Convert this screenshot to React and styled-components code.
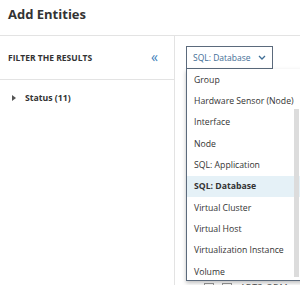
import React from "react";
import styled, { createGlobalStyle } from "styled-components";

const Global = createGlobalStyle`
  body {
    margin: 0;
    font-family: "Open Sans", "Liberation Sans", sans-serif;
    background: #fff;
    overflow: hidden;
  }
`;

const Page = styled.div`
  width: 300px;
  height: 285px;
  overflow: hidden;
  display: flex;
  flex-direction: column;
  color: #333;
`;

const Header = styled.div`
  height: 36px;
  display: flex;
  align-items: center;
  padding: 0 8px;
  border-bottom: 1px solid #e3e3e3;
  box-sizing: border-box;
`;

const Title = styled.h1`
  margin: 0;
  font-size: 13px;
  font-weight: 700;
  color: #333;
  margin-top: -8px;
`;

const Body = styled.div`
  flex: 1;
  display: flex;
`;

const Sidebar = styled.div`
  width: 175px;
  border-right: 1px solid #e3e3e3;
  box-sizing: border-box;
`;

const SideHead = styled.div`
  height: 44px;
  display: flex;
  align-items: center;
  justify-content: space-between;
  padding: 0 16px 0 8px;
  border-bottom: 1px solid #e3e3e3;
  box-sizing: border-box;
`;

const SideTitle = styled.span`
  font-size: 8.5px;
  font-weight: 700;
  color: #333;
`;

const Collapse = styled.span`
  font-size: 14px;
  color: #3d7fba;
  line-height: 1;
  margin-top: -2px;
`;

const FilterRow = styled.div`
  display: flex;
  align-items: center;
  gap: 9px;
  padding: 12px 0 0 12px;
  font-size: 8.7px;
  font-weight: 700;
  color: #333;
`;

const Caret = styled.span`
  width: 0;
  height: 0;
  border-top: 3px solid transparent;
  border-bottom: 3px solid transparent;
  border-left: 4px solid #555;
`;

const Main = styled.div`
  flex: 1;
  padding: 10px 0 0 11px;
  display: flex;
  flex-direction: column;
`;

const SelectWrap = styled.div`
  position: relative;
  align-self: flex-start;
`;

const SelectButton = styled.div`
  width: 87px;
  height: 23px;
  box-sizing: border-box;
  border: 1px solid #5b6a7c;
  display: flex;
  align-items: center;
  justify-content: space-between;
  padding: 0 6px 0 6px;
  font-size: 8.5px;
  color: #3f6e96;
`;

const Menu = styled.div`
  position: absolute;
  top: 23px;
  left: 0;
  width: 150px;
  height: 212px;
  background: #fff;
  border-left: 1px solid #5b6a7c;
  border-bottom: 1px solid #5b6a7c;
  box-shadow: 0 2px 4px rgba(0, 0, 0, 0.25);
  box-sizing: border-box;
  z-index: 2;
`;

const Item = styled.div`
  height: 21.33px;
  display: flex;
  align-items: center;
  padding-left: 7px;
  font-size: 8.7px;
  color: #333;
  font-weight: ${(p) => (p.active ? 700 : 400)};
  background: ${(p) => (p.active ? "#e5f1f7" : "transparent")};
`;

const Scrollbar = styled.div`
  position: absolute;
  left: 107px;
  top: 40px;
  width: 5px;
  height: 168px;
  background: #dcdcdc;
`;

const TableRow = styled.div`
  margin-top: auto;
  margin-bottom: -9px;
  display: flex;
  align-items: center;
  gap: 8px;
  padding-left: 18px;
  font-size: 9px;
  color: #555;
`;

const Box = styled.span`
  width: 8px;
  height: 8px;
  border: 1px solid #999;
`;

const items = [
  "Group",
  "Hardware Sensor (Node)",
  "Interface",
  "Node",
  "SQL: Application",
  "SQL: Database",
  "Virtual Cluster",
  "Virtual Host",
  "Virtualization Instance",
  "Volume",
];

const Chevron = () => (
  <svg width="8" height="5" viewBox="0 0 8 5">
    <path d="M1 1l3 3 3-3" fill="none" stroke="#3f6e96" strokeWidth="1.3" />
  </svg>
);

const App = () => {
  return (
    <Page>
      <Global />
      <Header>
        <Title>Add Entities</Title>
      </Header>
      <Body>
        <Sidebar>
          <SideHead>
            <SideTitle>FILTER THE RESULTS</SideTitle>
            <Collapse>«</Collapse>
          </SideHead>
          <FilterRow>
            <Caret />
            Status (11)
          </FilterRow>
        </Sidebar>
        <Main>
          <SelectWrap>
            <SelectButton>
              SQL: Database
              <Chevron />
            </SelectButton>
            <Menu>
              {items.map((it) => (
                <Item key={it} active={it === "SQL: Database"}>
                  {it}
                </Item>
              ))}
              <Scrollbar />
            </Menu>
          </SelectWrap>
          <TableRow>
            <Box />
            <Box />
            ADTS_ODM
          </TableRow>
        </Main>
      </Body>
    </Page>
  );
};

export default App;
